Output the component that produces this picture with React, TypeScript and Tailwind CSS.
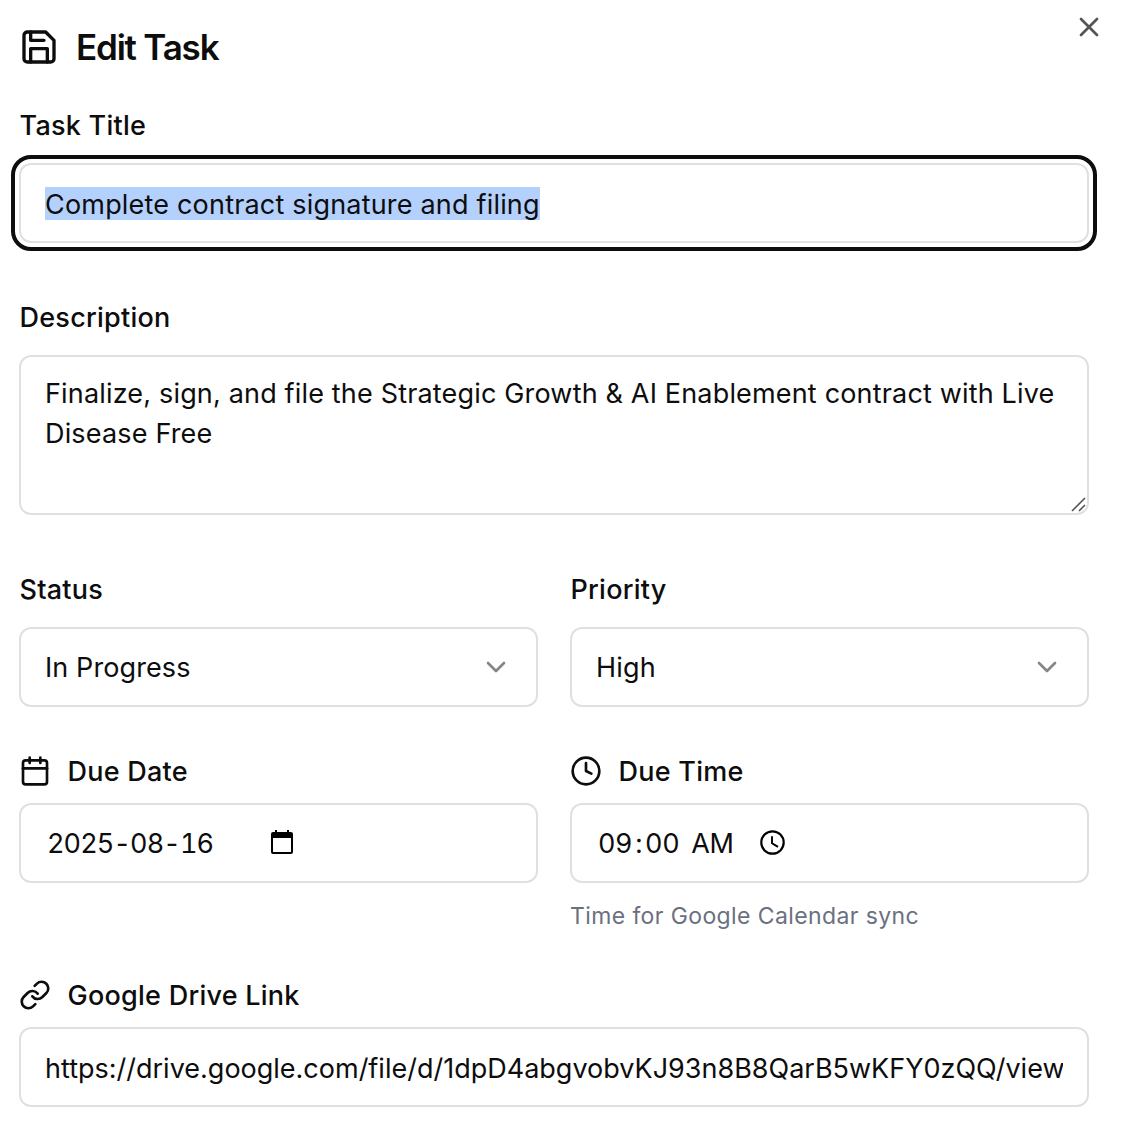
import type { ReactNode } from "react";
import { Calendar, ChevronDown, Clock, Link, X } from "lucide-react";

function SaveIcon() {
  return (
    <svg className="size-10" viewBox="0 0 24 24" fill="none" stroke="currentColor" strokeWidth="2" strokeLinecap="round" strokeLinejoin="round">
      <path d="M19 21H5a2 2 0 0 1-2-2V5a2 2 0 0 1 2-2h11l5 5v11a2 2 0 0 1-2 2z" />
      <path d="M17 21v-8H7v8M7 3v5h8" />
    </svg>
  );
}

function Label({ icon, children }: { icon?: ReactNode; children: ReactNode }) {
  return (
    <div className="flex h-7 items-center gap-4 text-[27px] leading-7 font-medium tracking-[0.25px] whitespace-nowrap">
      {icon}
      <span className="pt-px pl-[0.5px]">{children}</span>
    </div>
  );
}

function Field({ children, className = "" }: { children: ReactNode; className?: string }) {
  return (
    <div className={`flex h-20 items-center rounded-xl border-2 border-[#e0e0e0] px-6 text-[27px] leading-10 whitespace-nowrap ${className}`}>
      {children}
    </div>
  );
}

export default function App() {
  return (
    <main className="relative h-[1132px] w-[1136px] overflow-hidden bg-white pl-[19px] font-['Inter',sans-serif] text-[#0d0d0e]">
      <X className="absolute top-[11px] left-[1073px] size-8 text-[#555556]" strokeWidth={2} />
      <header className="flex h-[94px] items-center gap-[17px]">
        <SaveIcon />
        <h1 className="pt-px text-[35px] font-semibold tracking-[-1.2px]">Edit Task</h1>
      </header>
      <div className="w-[1070px]">
        <section className="mt-[17px]">
          <Label>Task Title</Label>
          <Field className="mt-6 tracking-[0.19px] outline-4 outline-offset-4 outline-[#0d0d0e]">
            <span className="h-[33px] bg-[#b3d1fc] leading-[36px]">Complete contract signature and filing</span>
          </Field>
        </section>
        <section className="mt-[60px]">
          <Label>Description</Label>
          <div className="relative mt-6 h-40 rounded-xl border-2 border-[#e0e0e0] px-6 pt-[17px] text-[27px] leading-10 tracking-[0.17px]">
            Finalize, sign, and file the Strategic Growth &amp; AI Enablement contract with Live Disease Free
            <svg className="absolute right-0 bottom-0 size-4" viewBox="0 0 16 16" fill="none" stroke="#555556" strokeWidth="1.6">
              <path d="M1 14 14 1M8 14l6-6" />
            </svg>
          </div>
        </section>
        <div className="mt-[60px] grid grid-cols-2 gap-8">
          <section>
            <Label>Status</Label>
            <Field className="mt-6 justify-between">
              <span className="pt-px tracking-[0.1px]">In Progress</span>
              <ChevronDown className="size-8 text-[#868687]" />
            </Field>
          </section>
          <section>
            <Label>Priority</Label>
            <Field className="mt-6 justify-between">
              <span className="pt-px tracking-[0.2px]">High</span>
              <ChevronDown className="size-8 text-[#868687]" />
            </Field>
          </section>
        </div>
        <div className="mt-[50px] grid grid-cols-2 gap-8">
          <section>
            <Label icon={<Calendar className="size-8" />}>Due Date</Label>
            <Field className="mt-[18px] tabular-nums">
              <span className="flex w-[222px] pt-px pl-[2px] tracking-[-0.9px]">
                <span>2025</span>
                <span>-</span>
                <span>08</span>
                <span>-</span>
                <span>16</span>
              </span>
              <svg className="mb-[2px] ml-[4px] h-6 w-[22px] text-black" viewBox="0 0 22 24" fill="none">
                <path d="M4 0h2v2h10V0h2v2h2a2 2 0 0 1 2 2v18a2 2 0 0 1-2 2H2a2 2 0 0 1-2-2V4a2 2 0 0 1 2-2h2ZM2 8v14h18V8Z" fill="currentColor" fillRule="evenodd" />
              </svg>
            </Field>
          </section>
          <section>
            <Label icon={<Clock className="size-8" />}>Due Time</Label>
            <Field className="mt-[18px] tabular-nums">
              <span className="flex w-[163px] pt-px pl-[2px] tracking-[-0.4px]">
                <span>09</span>
                <span className="px-[3px]">:</span>
                <span>00</span>
                <span className="pl-3">AM</span>
              </span>
              <svg className="mb-px h-[26px] w-[26px] text-black" viewBox="0 0 26 26" fill="none" stroke="currentColor" strokeWidth="2.2">
                <circle cx="13.5" cy="12.5" r="11.2" />
                <path d="M13 6.3V13.3l6 3.6" strokeWidth="1.9" />
              </svg>
            </Field>
            <p className="mt-[17px] text-[23px] leading-8 tracking-[0.39px] text-[#6b7080]">Time for Google Calendar sync</p>
          </section>
        </div>
        <section className="mt-[49px]">
          <Label icon={<Link className="size-8" />}>Google Drive Link</Label>
          <Field className="mt-[18px]">
            <span className="overflow-hidden pt-[3px]">https://drive.google.com/file/d/1dpD4abgvobvKJ93n8B8QarB5wKFY0zQQ/view</span>
          </Field>
        </section>
      </div>
    </main>
  );
}
